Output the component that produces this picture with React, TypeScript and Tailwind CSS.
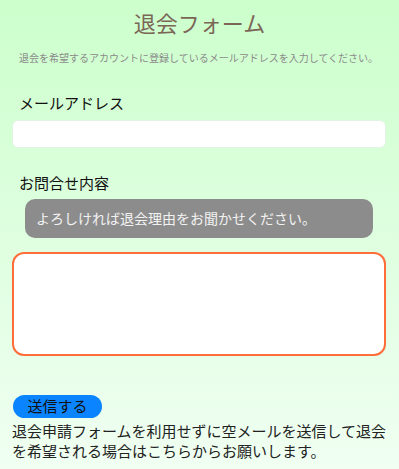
import React from "react";

export default function App() {
  return (
    <div
      className="min-h-[469px] w-full bg-gradient-to-b from-[#ccffcc] to-[#f0fff2] pb-2"
      style={{ fontFamily: '"Noto Sans CJK JP", "Noto Sans", sans-serif' }}
    >
      <h1 className="pt-[8px] text-center text-[22px] leading-[28px] font-normal text-[#7b6656]">
        退会フォーム
      </h1>
      <p className="mt-[15px] pl-[19px] text-[10px] leading-[14px] text-[#8a8a8a]">
        退会を希望するアカウントに登録しているメールアドレスを入力してください。
      </p>
      <div className="mt-[28px] pl-[19px] text-[15px] leading-[20px] text-[#111]">
        メールアドレス
      </div>
      <div className="mt-[7px] ml-[12px] mr-[13px] h-[28px] rounded-[6px] border border-[#e3f3e3] bg-white"></div>
      <div className="mt-[25px] pl-[19px] text-[15px] leading-[20px] text-[#111]">
        お問合せ内容
      </div>
      <div className="mt-[6px] ml-[25px] mr-[26px] flex h-[39px] items-center rounded-[10px] bg-[#8c8c8c] pl-[11px] text-[14px] text-[#f2f2f2]">
        よろしければ退会理由をお聞かせください。
      </div>
      <div className="mt-[14px] ml-[12px] mr-[13px] h-[104px] rounded-[12px] border-2 border-[#ff6e3a] bg-white"></div>
      <div className="mt-[39px] ml-[13px] flex h-[23px] w-[89px] items-center justify-center rounded-full bg-[#0a84ff] text-[15px] text-[#111]">
        送信する
      </div>
      <p className="mt-[3px] pl-[12px] pr-[10px] text-[15px] leading-[20px] text-[#222]">
        退会申請フォームを利用せずに空メールを送信して退会を希望される場合はこちらからお願いします。
      </p>
    </div>
  );
}
